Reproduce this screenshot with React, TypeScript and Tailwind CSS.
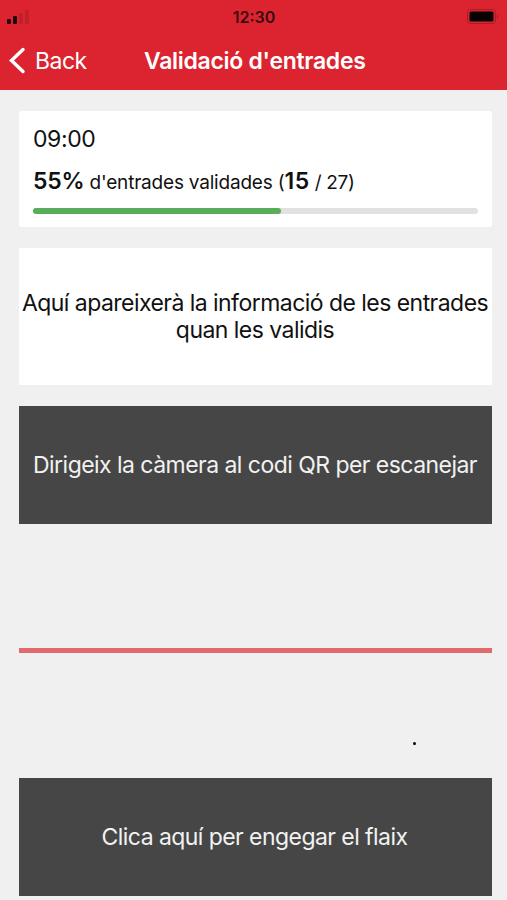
export default function App() {
  return (
    <div className="flex h-[900px] w-[507px] flex-col overflow-hidden bg-[#f0f0f0] font-['Inter','Liberation_Sans',sans-serif] text-[#111]">
      <header className="h-[90px] shrink-0 bg-[#db2430]">
        <div className="grid h-[33px] grid-cols-3 items-center pr-[6px] pl-[7px]">
          <svg width="24" height="16" viewBox="0 0 24 16" fill="#24070a">
            <rect x="0" y="10" width="4" height="5" rx="1" />
            <rect x="6" y="7" width="4" height="8" rx="1" />
            <rect x="12" y="4" width="4" height="11" rx="1" opacity=".14" />
            <rect x="18" y="1" width="4" height="14" rx="1" opacity=".14" />
          </svg>
          <span className="text-center text-[16px] font-semibold text-[#3b0a0e]">12:30</span>
          <svg className="justify-self-end" width="34" height="16" viewBox="0 0 34 16">
            <rect x="0.5" y="0.5" width="28" height="14" rx="3" fill="none" stroke="#a91c27" />
            <rect x="2.5" y="2.5" width="24" height="10" rx="1.5" fill="#090203" />
            <path d="M30 5v5q2.5-2.5 0-5" fill="#a91c27" />
          </svg>
        </div>
        <div className="grid h-[55px] grid-cols-[144px_1fr] items-center text-white">
          <div className="flex items-center pl-[9px] text-[23px] tracking-[-0.5px]">
            <svg width="17" height="28" viewBox="0 0 17 28" fill="none" stroke="white" strokeWidth="3.4" strokeLinecap="round">
              <path d="M14 2.5L2.5 13.5l11.5 11" />
            </svg>
            <span className="mt-px ml-[9px]">Back</span>
          </div>
          <h1 className="mt-px text-[23px] font-semibold tracking-[-0.29px] whitespace-nowrap">Validació d'entrades</h1>
        </div>
      </header>
      <main className="flex flex-col pt-[21px] pr-[15px] pl-[19px]">
        <section className="h-[116px] rounded-[3px] bg-white px-[14px] pt-[11px]">
          <div className="text-[23px] leading-[34px] tracking-[-0.4px]">09:00</div>
          <div className="mt-2 text-[19px] leading-[34px] tracking-[-0.2px] whitespace-nowrap">
            <b className="text-[23px] font-semibold">55%</b> d'entrades validades (<b className="text-[23px] font-semibold tracking-[0.5px]">15</b><span className="tracking-[-0.3px]"> / 27)</span>
          </div>
          <div className="mt-2 h-[6px] rounded-full bg-[#e1e1e1]">
            <div className="h-full w-[248px] rounded-full bg-[#58ad58]" />
          </div>
        </section>
        <section className="mt-[21px] flex h-[137px] items-center justify-center bg-white pr-px text-center text-[23px] leading-[27px] tracking-[-0.54px] whitespace-nowrap">
          <p>Aquí apareixerà la informació de les entrades<br />quan les validis</p>
        </section>
        <section className="mt-[21px] flex h-[118px] items-center justify-center bg-[#464646] pt-px pr-px text-[23px] tracking-[-0.54px] whitespace-nowrap text-[#f2f2f2]">Dirigeix la càmera al codi QR per escanejar</section>
        <div className="mt-[124px] h-[5px] bg-[#e06a6c]" />
        <div className="h-[125px] pt-[89px] pl-[394px]"><div className="size-[3px] rounded-full bg-black" /></div>
        <button className="h-[118px] bg-[#464646] pr-[2px] text-[23px] tracking-[-0.56px] text-[#f2f2f2]">Clica aquí per engegar el flaix</button>
      </main>
    </div>
  );
}
